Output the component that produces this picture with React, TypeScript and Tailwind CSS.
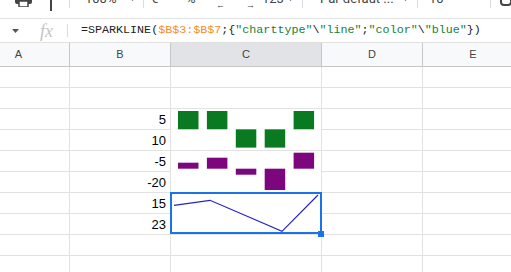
import React from 'react';

const cols = ['A', 'B', 'C', 'D', 'E'];

const Sep = () => <div className="w-px h-[18px] bg-[#dadce0] shrink-0" />;

const Toolbar = () => (
  <div className="h-[19px] border-b border-[#e3e3e3] overflow-hidden">
    <div className="flex items-center h-[40px] -mt-[21px] text-[13px] text-[#444] whitespace-nowrap" style={{ fontFamily: 'Roboto, "Liberation Sans", sans-serif' }}>
      <div className="ml-[15px] w-[35px] shrink-0">
        <svg width="17" height="16" viewBox="0 0 17 16" className="block">
          <rect x="0" y="4" width="17" height="9" rx="2" fill="#444" />
          <rect x="4" y="0" width="9" height="4" fill="#444" />
          <rect x="4" y="10" width="9" height="6" fill="#fff" stroke="#444" strokeWidth="1.5" />
        </svg>
      </div>
      <div className="w-[19px] shrink-0">
        <div className="w-[2px] h-[16px] mt-[8px] bg-[#444]" />
      </div>
      <div className="w-[16px] shrink-0"><Sep /></div>
      <span className="w-[43px] shrink-0">100%</span>
      <span className="w-[15px] shrink-0 text-[9px]">▼</span>
      <div className="w-[8px] shrink-0"><Sep /></div>
      <span className="w-[35px] shrink-0">€</span>
      <span className="w-[21px] shrink-0">%</span>
      <div className="w-[30px] shrink-0 flex flex-col leading-none">
        <span>.0</span>
        <span className="text-[9px] -mt-[1px] ml-[9px]">←</span>
      </div>
      <div className="w-[25px] shrink-0 flex flex-col leading-none">
        <span>.00</span>
        <span className="text-[9px] -mt-[1px] ml-[9px]">→</span>
      </div>
      <span className="w-[24px] shrink-0">123</span>
      <span className="w-[16px] shrink-0 text-[9px]">▼</span>
      <div className="w-[18px] shrink-0"><Sep /></div>
      <span className="w-[81px] shrink-0 overflow-hidden">Par défaut ...</span>
      <span className="w-[16px] shrink-0 text-[9px]">▼</span>
      <div className="w-[12px] shrink-0"><Sep /></div>
      <span className="w-[61px] shrink-0">10</span>
      <div className="w-[10px] shrink-0"><Sep /></div>
      <div className="w-[12px] h-[14px] border-2 border-[#444] rounded-sm shrink-0" />
    </div>
  </div>
);

const FormulaBar = () => (
  <div className="h-[24px] flex items-center border-b border-[#e0e0e0] bg-white">
    <svg className="ml-[12px] shrink-0" width="7" height="4" viewBox="0 0 7 4">
      <path d="M0 0 L7 0 L3.5 4 Z" fill="#555" />
    </svg>
    <span className="ml-[21px] text-[18px] italic text-[#c4c4c4] leading-none" style={{ fontFamily: '"Liberation Serif", serif' }}>
      fx
    </span>
    <div className="ml-[14px] w-px h-[13px] bg-[#dadce0]" />
    <div className="ml-[13px] text-[11.7px] text-[#222] whitespace-nowrap" style={{ fontFamily: '"Liberation Mono", monospace' }}>
      =SPARKLINE(<span className="text-[#ef8d2b]">$B$3:$B$7</span>;{'{'}
      <span className="text-[#188038]">"charttype"</span>\<span className="text-[#188038]">"line"</span>;
      <span className="text-[#188038]">"color"</span>\<span className="text-[#188038]">"blue"</span>{'})'}
    </div>
  </div>
);

const WinLoss = () => {
  const up = [true, true, false, false, true];
  return (
    <svg width="150" height="41" viewBox="0 0 150 41" className="block">
      {up.map((u, i) => (
        <rect key={i} x={7 + i * 28.9} y={u ? 2 : 20.3} width="20.5" height="18.3" fill="#0a7a22" />
      ))}
    </svg>
  );
};

const Columns = () => {
  const bars = [
    { y: 11.7, h: 6 },
    { y: 6.7, h: 11 },
    { y: 17.7, h: 6 },
    { y: 17.7, h: 21.3 },
    { y: 1.7, h: 16 },
  ];
  return (
    <svg width="150" height="41" viewBox="0 0 150 41" className="block">
      {bars.map((b, i) => (
        <rect key={i} x={7 + i * 28.9} y={b.y} width="20.5" height={b.h} fill="#7d067e" />
      ))}
    </svg>
  );
};

const Line = () => (
  <svg width="150" height="41" viewBox="0 0 150 41" className="block">
    <polyline points="3,12.3 39,7.3 75,22.7 111,38.3 147,2" fill="none" stroke="#2323c8" strokeWidth="1.2" />
  </svg>
);

const values: Record<number, string> = { 3: '5', 4: '10', 5: '-5', 6: '-20', 7: '15', 8: '23' };

export default function App() {
  const rows = Array.from({ length: 10 }, (_, i) => i + 1);
  const cell = 'border-r border-b border-[#e2e2e2]';
  return (
    <div className="w-[511px] h-[272px] overflow-hidden bg-white" style={{ fontFamily: 'Arial, "Liberation Sans", sans-serif' }}>
      <Toolbar />
      <FormulaBar />
      <div className="-ml-[32px] grid grid-cols-[102px_101px_151px_101px_101px] grid-rows-[24px_repeat(10,21px)]">
        {cols.map((c) => (
          <div
            key={c}
            className={`flex items-center justify-center border-r border-b border-[#c4c7c5] text-[11px] text-[#444] ${c === 'C' ? 'bg-[#e1e3e6]' : 'bg-[#f8f9fa]'}`}
          >
            {c}
          </div>
        ))}
        {rows.map((r) => (
          <React.Fragment key={r}>
            <div className={cell} />
            <div className={`${cell} flex items-end justify-end pr-[4px] pb-[3px] text-[13px] leading-none text-black`}>
              {values[r] ?? ''}
            </div>
            {r === 3 && (
              <div className={`${cell} row-span-2`}>
                <WinLoss />
              </div>
            )}
            {r === 5 && (
              <div className={`${cell} row-span-2`}>
                <Columns />
              </div>
            )}
            {r === 7 && (
              <div className={`${cell} row-span-2 relative`}>
                <Line />
                <div className="absolute top-[-1px] left-[-1px] w-[152px] h-[42px] border-2 border-[#1a73e8]">
                  <div className="absolute left-[146px] top-[37px] w-[6px] h-[6px] bg-[#1a73e8]" />
                </div>
              </div>
            )}
            {(r < 3 || r > 8) && <div className={cell} />}
            <div className={cell} />
            <div className={cell} />
          </React.Fragment>
        ))}
      </div>
    </div>
  );
}
